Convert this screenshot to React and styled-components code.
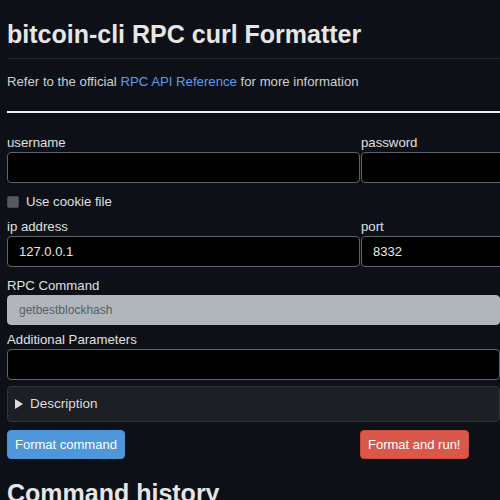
import React from 'react'
import styled, { createGlobalStyle } from 'styled-components'

const GlobalStyle = createGlobalStyle`
  body {
    margin: 0;
    background: #0d1117;
    color: #e6e6e6;
    font-family: 'Liberation Sans', Arial, sans-serif;
    overflow: hidden;
  }
`

const Page = styled.div`
  padding: 0 7px;
  width: 706px;
`

const Title = styled.h1`
  font-size: 25px;
  font-weight: 700;
  margin: 0;
  padding: 20px 0 10px;
  line-height: 28px;
  color: #e6e6e6;
  border-bottom: 1px solid #21262d;
  width: 493px;
`

const Intro = styled.p`
  font-size: 13.2px;
  line-height: 16px;
  margin: 15px 0 0;
  color: #d0d0d0;
`

const RefLink = styled.a`
  color: #5c9ded;
  text-decoration: none;
`

const Rule = styled.hr`
  border: none;
  height: 2px;
  background: #f0f0f0;
  margin: 21px 0 22px;
`

const Row = styled.div`
  display: grid;
  grid-template-columns: 353px 353px;
  gap: 1px;
`

const Field = styled.div`
  display: flex;
  flex-direction: column;
`

const Label = styled.label`
  font-size: 13.2px;
  color: #e0e0e0;
  line-height: 15px;
  margin-bottom: 2px;
`

const Input = styled.input`
  box-sizing: border-box;
  height: ${p => (p.disabled ? '30px' : '31px')};
  width: ${p => (p.wide ? '493px' : '100%')};
  background: ${p => (p.disabled ? '#b1b6bc' : '#000')};
  border: 1px solid ${p => (p.disabled ? '#b1b6bc' : '#5f636a')};
  border-radius: 4px;
  color: ${p => (p.disabled ? '#5a5e63' : '#e8e8e8')};
  font-family: inherit;
  font-size: ${p => (p.disabled ? '12px' : '13px')};
  padding: 0 11px;
  outline: none;
`

const CheckRow = styled.label`
  display: flex;
  align-items: center;
  gap: 7px;
  font-size: 13.2px;
  line-height: 16px;
  color: #e0e0e0;
  margin: 11px 0 9px;
`

const Box = styled.span`
  width: 10px;
  height: 10px;
  border-radius: 2px;
  background: #555a60;
  border: 1px solid #44484e;
`

const Section = styled.div`
  margin-top: ${p => p.gap || 0}px;
`

const Details = styled.details`
  margin-top: 6px;
  width: 493px;
  box-sizing: border-box;
  background: #1c1f24;
  border: 1px solid #30363d;
  border-radius: 4px;
  font-size: 13.5px;
  color: #dcdcdc;
`

const Summary = styled.summary`
  padding: 10px 5px;
  line-height: 14px;
  cursor: pointer;
  list-style: none;
  display: flex;
  align-items: center;
  gap: 7px;
  &::-webkit-details-marker {
    display: none;
  }
`

const Arrow = styled.span`
  width: 0;
  height: 0;
  border-top: 5px solid transparent;
  border-bottom: 5px solid transparent;
  border-left: 8px solid #dcdcdc;
  margin-left: 2px;
`

const Buttons = styled.div`
  display: grid;
  grid-template-columns: 353px 353px;
  margin-top: 8px;
`

const Button = styled.button`
  justify-self: start;
  height: 29px;
  padding: 0 7px;
  border-radius: 4px;
  border: 1px solid ${p => (p.danger ? '#c9493c' : '#4a93d6')};
  background: ${p => (p.danger ? '#d9584a' : '#4d97da')};
  color: #fff;
  font-family: inherit;
  font-size: 13px;
`

const Heading = styled.h2`
  font-size: 25px;
  font-weight: 700;
  line-height: 28px;
  margin: 20px 0 0;
  color: #e6e6e6;
`

export default function App() {
  return (
    <>
      <GlobalStyle />
      <Page>
        <Title>bitcoin-cli RPC curl Formatter</Title>
        <Intro>
          Refer to the official <RefLink href="#">RPC API Reference</RefLink> for more information
        </Intro>
        <Rule />
        <Row>
          <Field>
            <Label>username</Label>
            <Input />
          </Field>
          <Field>
            <Label>password</Label>
            <Input type="password" />
          </Field>
        </Row>
        <CheckRow>
          <Box />
          Use cookie file
        </CheckRow>
        <Row>
          <Field>
            <Label>ip address</Label>
            <Input defaultValue="127.0.0.1" />
          </Field>
          <Field>
            <Label>port</Label>
            <Input defaultValue="8332" />
          </Field>
        </Row>
        <Section gap={11}>
          <Field>
            <Label>RPC Command</Label>
            <Input disabled wide value="getbestblockhash" />
          </Field>
        </Section>
        <Section gap={7}>
          <Field>
            <Label>Additional Parameters</Label>
            <Input wide />
          </Field>
        </Section>
        <Details>
          <Summary>
            <Arrow />
            Description
          </Summary>
        </Details>
        <Buttons>
          <Button>Format command</Button>
          <Button danger>Format and run!</Button>
        </Buttons>
        <Heading>Command history</Heading>
      </Page>
    </>
  )
}
